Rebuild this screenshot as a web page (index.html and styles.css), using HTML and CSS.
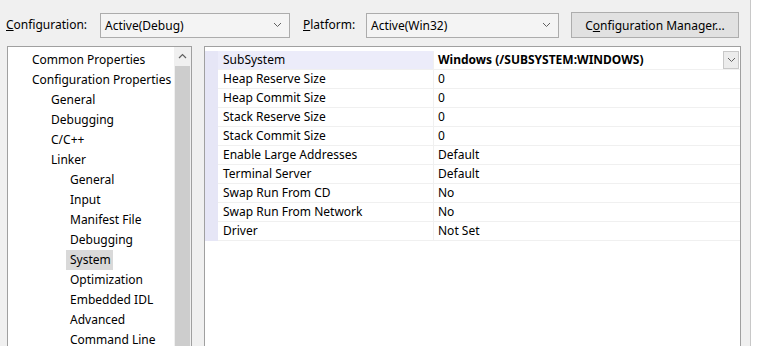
FILE: index.html
```html
<!DOCTYPE html>
<html lang="en">
<head>
    <meta charset="UTF-8">
    <link rel="stylesheet" href="styles.css">
    <title>Property Pages</title>
</head>
<body>

<div class="dialog">
    <div class="toolbar">
        <label class="field-label label-config"><u>C</u>onfiguration:</label>
        <div class="combo combo-config">
            <span>Active(Debug)</span>
            <svg class="chev" width="9" height="6" viewBox="0 0 9 6"><path d="M1 1 L4.5 4.5 L8 1" fill="none" stroke="#606060" stroke-width="1"/></svg>
        </div>
        <label class="field-label label-platform"><u>P</u>latform:</label>
        <div class="combo combo-platform">
            <span>Active(Win32)</span>
            <svg class="chev" width="9" height="6" viewBox="0 0 9 6"><path d="M1 1 L4.5 4.5 L8 1" fill="none" stroke="#606060" stroke-width="1"/></svg>
        </div>
        <button class="manager-btn">C<u>o</u>nfiguration Manager...</button>
    </div>

    <div class="main">
        <div class="tree">
            <ul class="tree-list">
                <li class="lvl1">Common Properties</li>
                <li class="lvl1">Configuration Properties</li>
                <li class="lvl2">General</li>
                <li class="lvl2">Debugging</li>
                <li class="lvl2">C/C++</li>
                <li class="lvl2">Linker</li>
                <li class="lvl3">General</li>
                <li class="lvl3">Input</li>
                <li class="lvl3">Manifest File</li>
                <li class="lvl3">Debugging</li>
                <li class="lvl3"><span class="selected">System</span></li>
                <li class="lvl3">Optimization</li>
                <li class="lvl3">Embedded IDL</li>
                <li class="lvl3">Advanced</li>
                <li class="lvl3">Command Line</li>
            </ul>
            <div class="scrollbar">
                <div class="scroll-up">
                    <svg width="9" height="6" viewBox="0 0 9 6"><path d="M1 5 L4.5 1.5 L8 5" fill="none" stroke="#606060" stroke-width="1.2"/></svg>
                </div>
                <div class="scroll-thumb"></div>
            </div>
        </div>

        <div class="grid">
            <div class="grid-inner">
                <div class="margin-col"></div>
                <div class="rows">
                    <div class="row active">
                        <div class="name">SubSystem</div>
                        <div class="value bold">Windows (/SUBSYSTEM:WINDOWS)
                            <span class="drop"><svg width="9" height="6" viewBox="0 0 9 6"><path d="M1 1 L4.5 4.5 L8 1" fill="none" stroke="#606060" stroke-width="1"/></svg></span>
                        </div>
                    </div>
                    <div class="row"><div class="name">Heap Reserve Size</div><div class="value">0</div></div>
                    <div class="row"><div class="name">Heap Commit Size</div><div class="value">0</div></div>
                    <div class="row"><div class="name">Stack Reserve Size</div><div class="value">0</div></div>
                    <div class="row"><div class="name">Stack Commit Size</div><div class="value">0</div></div>
                    <div class="row"><div class="name">Enable Large Addresses</div><div class="value">Default</div></div>
                    <div class="row"><div class="name">Terminal Server</div><div class="value">Default</div></div>
                    <div class="row"><div class="name">Swap Run From CD</div><div class="value">No</div></div>
                    <div class="row"><div class="name">Swap Run From Network</div><div class="value">No</div></div>
                    <div class="row"><div class="name">Driver</div><div class="value">Not Set</div></div>
                </div>
            </div>
        </div>
    </div>
</div>

</body>
</html>
```

FILE: styles.css
```css
body {
    margin: 0;
    background-color: #fff;
    font-family: "Noto Sans", "Open Sans", sans-serif;
    font-size: 12px;
    color: #000;
    overflow: hidden;
}

.dialog {
    width: 750px;
    height: 346px;
    background-color: #f0f0f0;
    border-right: 1px solid #c8c8c8;
    overflow: hidden;
}

.toolbar {
    display: flex;
    align-items: center;
    height: 26px;
    padding-top: 12px;
    padding-left: 6px;
}

.field-label {
    line-height: 26px;
}

.label-config {
    width: 94px;
}

.label-platform {
    margin-left: 13px;
    width: 63px;
}

.combo {
    display: flex;
    align-items: center;
    justify-content: space-between;
    box-sizing: border-box;
    height: 25px;
    padding: 0 7px 0 4px;
    border: 1px solid #acacac;
    background-color: #f4f4f4;
}

.combo-config {
    width: 190px;
}

.combo-platform {
    width: 193px;
}

.manager-btn {
    box-sizing: border-box;
    margin-left: 12px;
    width: 168px;
    height: 26px;
    border: 1px solid #adadad;
    background-color: #e1e1e1;
    font-family: inherit;
    font-size: 12px;
    color: #000;
    padding: 0;
}

.main {
    display: flex;
    padding-top: 8px;
    padding-left: 7px;
}

.tree {
    display: flex;
    box-sizing: border-box;
    width: 185px;
    height: 320px;
    border: 1px solid #a0a0a0;
    background-color: #fff;
}

.tree-list {
    flex: 1;
    list-style: none;
    margin: 0;
    padding: 3px 0 0 0;
    overflow: hidden;
    white-space: nowrap;
}

.tree-list li {
    height: 20px;
    line-height: 20px;
}

.lvl1 {
    padding-left: 24px;
}

.lvl2 {
    padding-left: 43px;
}

.lvl3 {
    padding-left: 62px;
}

.selected {
    display: inline-block;
    margin-left: -4px;
    padding: 0 2px 0 4px;
    background-color: #d9d9d9;
}

.scrollbar {
    width: 17px;
    background-color: #f0f0f0;
    display: flex;
    flex-direction: column;
}

.scroll-up {
    height: 17px;
    display: flex;
    align-items: center;
    justify-content: center;
}

.scroll-thumb {
    flex: 1;
    margin: 2px 1px 0 1px;
    background-color: #cdcdcd;
}

.grid {
    box-sizing: border-box;
    margin-left: 12px;
    width: 537px;
    height: 320px;
    border: 1px solid #a0a0a0;
    background-color: #fff;
    padding-top: 4px;
}

.grid-inner {
    display: flex;
}

.margin-col {
    width: 13px;
    background-color: #e6e6f6;
}

.rows {
    flex: 1;
}

.row {
    display: flex;
    height: 19px;
    line-height: 18px;
    border-bottom: 1px solid #f0f0f0;
    box-sizing: border-box;
}

.name {
    box-sizing: border-box;
    width: 216px;
    padding-left: 5px;
    border-right: 1px solid #f0f0f0;
}

.row.active .name {
    background-color: #ececfa;
}

.value {
    flex: 1;
    padding-left: 4px;
    position: relative;
}

.bold {
    font-weight: bold;
}

.drop {
    position: absolute;
    right: 1px;
    top: 0;
    box-sizing: border-box;
    width: 16px;
    height: 18px;
    border: 1px solid #c8c8c8;
    background-color: #ececec;
    display: flex;
    align-items: center;
    justify-content: center;
}
```
